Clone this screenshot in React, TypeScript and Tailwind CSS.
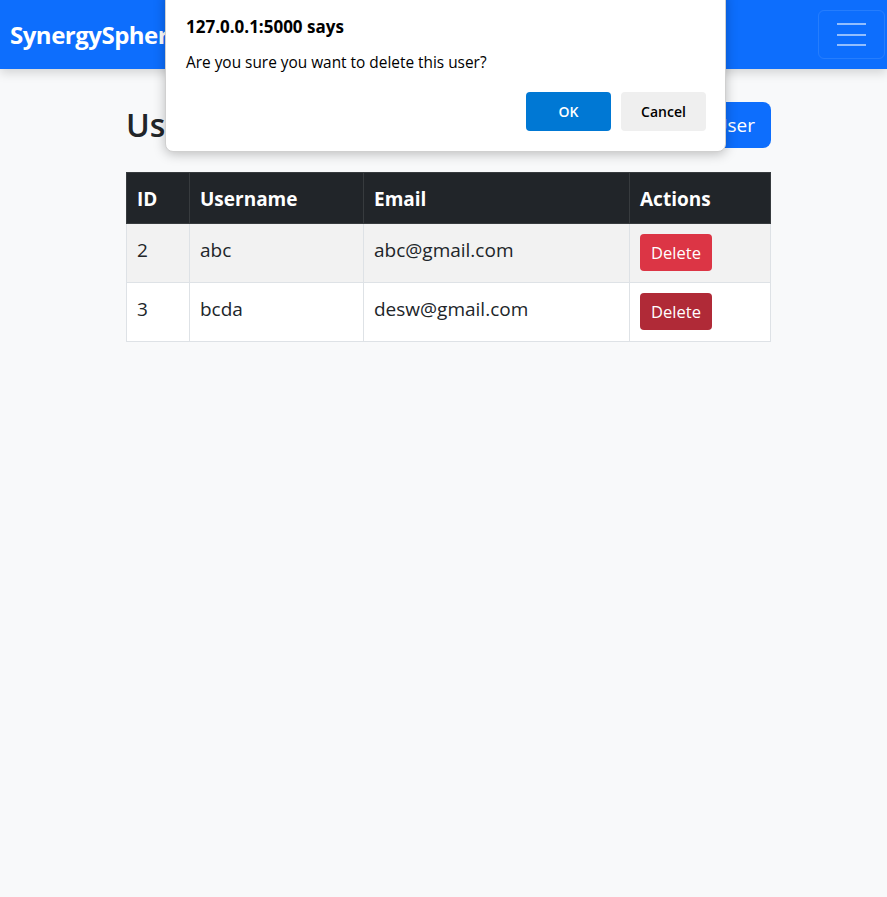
import React from 'react';

const users = [
  { id: 2, username: 'abc', email: 'abc@gmail.com' },
  { id: 3, username: 'bcda', email: 'desw@gmail.com' },
];

const App: React.FC = () => {
  return (
    <div className="relative min-h-[897px] bg-[#f8f9fa] font-['Open_Sans',sans-serif] text-[#212529]">
      {/* Navbar */}
      <nav className="flex h-[69px] items-center justify-between bg-[#0d6efd] pl-[10px] pr-[2px] shadow-[0_4px_10px_rgba(0,0,0,0.15)]">
        <span className="text-[24px] font-bold tracking-[-0.5px] text-white">SynergySphere</span>
        <button className="flex h-[49px] w-[67px] flex-col items-center justify-center gap-[8.5px] rounded-[6px] border border-white/10">
          <span className="block h-[2px] w-[29px] bg-white/55" />
          <span className="block h-[2px] w-[29px] bg-white/55" />
          <span className="block h-[2px] w-[29px] bg-white/55" />
        </button>
      </nav>

      {/* Content */}
      <div className="ml-[126px] w-[645px] pt-[33px]">
        <div className="mb-[24px] flex items-center justify-between">
          <h2 className="text-[32px] font-semibold leading-[1.2]">Users</h2>
          <button className="h-[46px] rounded-[8px] bg-[#0d6efd] px-[16px] text-[19px] text-white">Add User</button>
        </div>

        <table className="w-full border-collapse text-[19px]">
          <thead>
            <tr className="h-[51px] bg-[#212529] text-left text-white">
              <th className="w-[63px] border border-[#373b3e] px-[10px] pt-[3px] font-bold">ID</th>
              <th className="w-[174px] border border-[#373b3e] px-[10px] pt-[3px] font-bold">Username</th>
              <th className="w-[266px] border border-[#373b3e] px-[10px] pt-[3px] font-bold">Email</th>
              <th className="border border-[#373b3e] px-[10px] pt-[3px] font-bold">Actions</th>
            </tr>
          </thead>
          <tbody>
            {users.map((u, i) => (
              <tr key={u.id} className={i === 0 ? 'h-[59px] bg-[#f2f2f2]' : 'h-[59px] bg-white'}>
                <td className="border border-[#dee2e6] px-[10px] align-top pt-[12px]">{u.id}</td>
                <td className="border border-[#dee2e6] px-[10px] align-top pt-[12px]">{u.username}</td>
                <td className="border border-[#dee2e6] px-[10px] align-top pt-[12px]">{u.email}</td>
                <td className="border border-[#dee2e6] px-[10px] align-top pt-[10px]">
                  <button
                    className={
                      i === 0
                        ? 'h-[37px] w-[72px] rounded-[4px] bg-[#dc3545] pt-[1px] text-[16.5px] text-white'
                        : 'h-[37px] w-[72px] rounded-[4px] bg-[#b02a37] pt-[1px] text-[16.5px] text-white'
                    }
                  >
                    Delete
                  </button>
                </td>
              </tr>
            ))}
          </tbody>
        </table>
      </div>

      {/* Browser confirm dialog */}
      <div className="absolute left-[165px] top-[-10px] w-[561px] rounded-[8px] border border-[#d0d0d0] bg-white pb-[20px] pl-[20px] pr-[19px] pt-[25px] shadow-[0_2px_12px_rgba(0,0,0,0.25)]">
        <div className="text-[17px] font-bold leading-[22px] text-black">127.0.0.1:5000 says</div>
        <div className="mt-[15px] text-[15.4px] leading-[20px] text-black">Are you sure you want to delete this user?</div>
        <div className="mt-[19px] flex justify-end gap-[10px]">
          <button className="h-[39px] w-[85px] rounded-[4px] bg-[#0078d4] text-[14px] font-semibold text-white">OK</button>
          <button className="h-[39px] w-[85px] rounded-[4px] bg-[#efefef] text-[14px] font-semibold text-black">Cancel</button>
        </div>
      </div>
    </div>
  );
};

export default App;
